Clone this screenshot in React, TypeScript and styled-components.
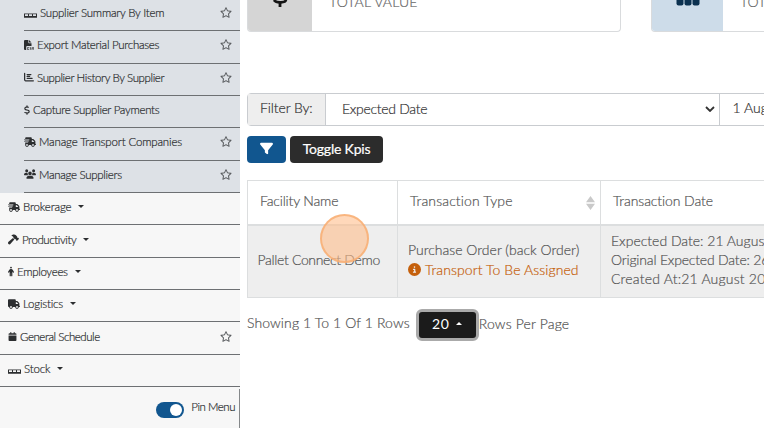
import React from "react";
import styled, { createGlobalStyle } from "styled-components";
import { FaFileCsv, FaChartBar, FaDollarSign, FaTruckFast, FaTruck, FaHammer, FaPerson, FaCalendar, FaUsers, FaFilter, FaCircleInfo, FaRegStar } from "react-icons/fa6";

const Global = createGlobalStyle`
  * { box-sizing: border-box; }
  body { margin: 0; background: #fff; overflow: hidden; font-family: Lato, "Open Sans", sans-serif; font-weight: 300; }
`;
const Page = styled.div`display: flex; width: 764px; height: 428px; overflow: hidden;`;
const Sidebar = styled.nav`width: 240px; flex: none; height: 428px; background: #f7f7f7; display: flex; flex-direction: column; color: #2c2e30; overflow: hidden;`;
const SubMenu = styled.div`background: #dde1e6; padding-left: 24px; margin-top: -1.2px; flex: none;`;
const Item = styled.div<{ $inset?: boolean }>`
  height: 32.37px; flex: none; border-bottom: 1px solid #6d7073; display: flex; align-items: center;
  padding: 0 8px 4px ${p => (p.$inset ? 0 : 8)}px; font-size: 11.5px; white-space: nowrap;
  > svg:first-child { flex: none; margin-right: 3px; }
`;
const Text = styled.span<{ $ls?: number }>`
  letter-spacing: ${p => p.$ls ?? 0}px; white-space: pre; -webkit-text-stroke: 0.2px currentColor;
`;
const Star = styled(FaRegStar)`margin-left: auto; width: 12px; height: 11px; color: #5a5d60;`;
const Caret = styled.i<{ $up?: boolean }>`
  width: 0; height: 0; margin-left: 7px; border: 3px solid transparent;
  ${p => (p.$up ? "border-bottom-color: currentColor; border-top: 0;" : "border-top-color: currentColor; border-bottom: 0;")}
`;
const DollarIcon = styled(FaDollarSign)`width: 6px; height: 10px;`;
const PersonIcon = styled(FaPerson)`width: 6px; height: 11px;`;
const PalletIcon = styled.svg`width: 13px; height: 5px; margin-top: 6px;`;
const PinRow = styled.div`
  flex: 1; margin-top: 2px; border-right: 1px solid #85888a; display: flex; justify-content: flex-end; align-items: flex-start;
  padding: 11px 4px 0 0; font-size: 11.5px; gap: 7px;
`;
const Switch = styled.span`width: 28px; height: 16px; margin-top: 2px; border-radius: 8px; background: #11568f; display: flex; justify-content: flex-end; padding: 2px;`;
const Knob = styled.span`width: 12px; height: 12px; border-radius: 50%; background: #fff;`;

const Main = styled.main`flex: none; width: 524px; overflow: hidden; padding-left: 7px; color: #555;`;
const Cards = styled.div`display: flex; gap: 30px; height: 32px;`;
const Card = styled.div`width: 374px; flex: none; height: 32px; display: flex; border: 1px solid #d9dbdd; border-top: 0; border-radius: 0 0 4px 4px; overflow: hidden;`;
const CardIcon = styled.div<{ $bg: string; $w: number }>`width: ${p => p.$w}px; height: 31px; background: ${p => p.$bg}; display: flex; justify-content: center;`;
const CardLabel = styled.div`margin: -7px 0 0 17px; font-size: 14px; line-height: 17px; color: #666;`;
const FilterBar = styled.div`display: flex; width: 700px; height: 33px; margin-top: 61px; border: 1px solid #c9ccd0; border-radius: 4px; font-size: 14px; line-height: 28px; color: #333;`;
const FilterLabel = styled.div`width: 78px; background: #eee; border-right: 1px solid #c9ccd0; padding-left: 12px;`;
const Select = styled.div`
  width: 394px; border-right: 1px solid #c9ccd0; padding: 0 4px 0 16px; display: flex; align-items: center; justify-content: space-between;
  span { margin-top: -2px; }
  svg { margin-top: -1px; }
`;
const DateField = styled.div`padding-left: 12.5px;`;
const Buttons = styled.div`display: flex; gap: 4px; margin-top: 10px;`;
const Button = styled.button<{ $bg: string; $w: number }>`
  width: ${p => p.$w}px; height: 27px; padding: 0 0 3px; border: 0; border-radius: 4px; background: ${p => p.$bg}; color: #fff;
  font: 14px Lato, sans-serif; display: flex; align-items: center; justify-content: center;
`;
const Table = styled.div`
  margin-top: 17px; width: 640px; display: grid; grid-template-columns: 150px 203px 287px; grid-template-rows: 45px 71px;
  border: 1px solid #dcdedf; border-right: 0; font-size: 14px;
`;
const Head = styled.div`
  border-right: 1px solid #dcdedf; border-bottom: 2px solid #dcdedf; padding: 0 5px 3px 12px;
  display: flex; align-items: center; justify-content: space-between; white-space: nowrap;
  > span { margin-top: -1px; }
  > svg { margin-top: 3px; }
`;
const Cell = styled.div`border-right: 1px solid #dcdedf; background: #eee; padding: 0 0 4px 10px; display: flex; flex-direction: column; justify-content: center; line-height: 19px; white-space: nowrap;`;
const FacilityCell = styled(Cell)`position: relative; padding-left: 9.5px;`;
const Warn = styled.div`display: flex; align-items: center; color: #c5600c; gap: 4px; margin-top: 1px;`;
const Pointer = styled.span`position: absolute; left: 72px; top: -12px; width: 49px; height: 49px; border-radius: 50%; border: 2px solid rgba(248,172,112,.8); background: rgba(255,190,140,.6);`;
const Footer = styled.div`
  display: flex; align-items: flex-start; margin-top: 11px; font-size: 14px; line-height: 28px;
  > span:last-child { margin-top: 1px; }
`;
const PageSize = styled.button`
  width: 63px; height: 32px; margin: 0 0 0 6px; border: 3px solid #aaa; border-radius: 6px; background: #1b1b1b; color: #fff; padding: 0 0 4px;
  font: 14px Lato, sans-serif; display: flex; align-items: center; justify-content: center; letter-spacing: .5px;
`;

const Pallet = () => (
  <PalletIcon viewBox="0 0 13 5" fill="currentColor">
    <path d="M0 .4h13v.9H0zM0 3h13v1.700H0zM0 1h1v2.500H0zM4 1h1v2.500H4zM8 1h1v2.500H8zM12 1h1v2.500h-1z" />
  </PalletIcon>
);

export default function App() {
  return (
    <Page>
      <Global />
      <Sidebar>
        <SubMenu>
          <Item $inset><Pallet /><Text $ls={-0.23}>Supplier Summary By Item</Text><Star /></Item>
          <Item $inset><FaFileCsv size={10} /><Text $ls={-0.28}>Export Material Purchases</Text><Star /></Item>
          <Item $inset><FaChartBar size={10} /><Text $ls={-0.39}>Supplier History By Supplier</Text><Star /></Item>
          <Item $inset><DollarIcon /><Text $ls={-0.3}>Capture Supplier Payments</Text></Item>
          <Item $inset><FaTruckFast size={12} /><Text $ls={-0.16}>Manage Transport Companies</Text><Star /></Item>
          <Item $inset><FaUsers size={12} /><Text $ls={-0.3}>Manage Suppliers</Text><Star /></Item>
        </SubMenu>
        <Item><FaTruckFast size={12} /><Text $ls={-0.14}>Brokerage</Text><Caret /></Item>
        <Item><FaHammer size={11} /><Text $ls={-0.42}>Productivity</Text><Caret /></Item>
        <Item><PersonIcon /><Text $ls={-0.3}>Employees</Text><Caret /></Item>
        <Item><FaTruck size={12} /><Text $ls={-0.2}>Logistics</Text><Caret /></Item>
        <Item><FaCalendar size={9} /><Text $ls={-0.45}>General Schedule</Text><Star /></Item>
        <Item><Pallet /><Text $ls={-0.15}>Stock</Text><Caret /></Item>
        <PinRow><Switch><Knob /></Switch><Text $ls={-0.48}>Pin Menu</Text></PinRow>
      </Sidebar>
      <Main>
        <Cards>
          <Card>
            <CardIcon $bg="#d5d5d5" $w={64}>
              <svg width="16" height="7" viewBox="0 0 16 7" fill="none" stroke="#151515"><path d="M2 0c2 3.2 12 3.2 12-.5" strokeWidth="2.6" /><path d="M8 1v6" strokeWidth="2.8" /></svg>
            </CardIcon>
            <CardLabel><Text $ls={0.15}>TOTAL VALUE</Text></CardLabel>
          </Card>
          <Card>
            <CardIcon $bg="#cddce9" $w={71}>
              <svg width="24" height="6" viewBox="0 0 24 6" fill="#0b3150"><rect x="0.5" y="-4" width="7" height="9.5" rx="2" /><rect x="8.5" y="-4" width="7" height="9.5" rx="2" /><rect x="16.5" y="-4" width="7" height="9.5" rx="2" /></svg>
            </CardIcon>
            <CardLabel><Text>TOTAL</Text></CardLabel>
          </Card>
        </Cards>
        <FilterBar>
          <FilterLabel><Text $ls={-0.1}>Filter By:</Text></FilterLabel>
          <Select><Text $ls={-0.3}>Expected Date</Text>
            <svg width="10" height="6" viewBox="0 0 10 6" fill="none" stroke="#333" strokeWidth="1.8"><path d="M1 1l4 4 4-4" /></svg>
          </Select>
          <DateField><Text>1 August 2023</Text></DateField>
        </FilterBar>
        <Buttons>
          <Button $bg="#11568f" $w={39}><FaFilter size={13} /></Button>
          <Button $bg="#2c2c2c" $w={93}><Text $ls={-0.2}>Toggle Kpis</Text></Button>
        </Buttons>
        <Table>
          <Head><Text $ls={-0.17}>Facility Name</Text></Head>
          <Head><Text $ls={0.12}>Transaction Type</Text>
            <svg width="9" height="14" viewBox="0 0 9 14" fill="#c9c9c9"><path d="M0 6.3L4.5 0 9 6.3zM0 7.7h9L4.5 14z" /></svg>
          </Head>
          <Head><Text $ls={-0.1}>Transaction Date</Text></Head>
          <FacilityCell><Text $ls={-0.33}>Pallet Connect Demo</Text><Pointer /></FacilityCell>
          <Cell><Text>Purchase Order (back Order)</Text><Warn><FaCircleInfo size={13} /><Text $ls={0.08}>Transport To Be Assigned</Text></Warn></Cell>
          <Cell><Text>Expected Date: 21 August 2023</Text><Text $ls={-0.19}>Original Expected Date: 26 August 2023</Text><Text $ls={0.2}>Created At:21 August 2023</Text></Cell>
        </Table>
        <Footer>
          <Text $ls={0.1}>Showing 1 To 1 Of 1 Rows</Text>
          <PageSize>20<Caret $up /></PageSize>
          <Text $ls={0.15}>Rows Per Page</Text>
        </Footer>
      </Main>
    </Page>
  );
}
